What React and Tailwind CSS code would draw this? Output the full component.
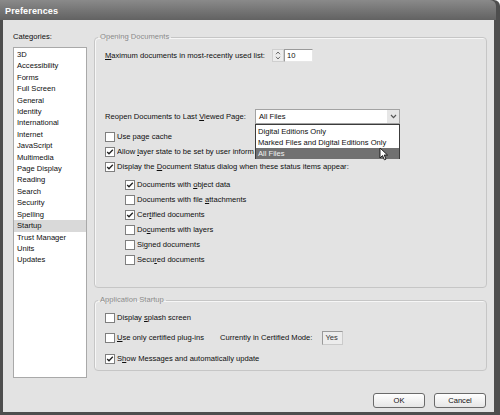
import React from "react";

const categories = [
	"3D",
	"Accessibility",
	"Forms",
	"Full Screen",
	"General",
	"Identity",
	"International",
	"Internet",
	"JavaScript",
	"Multimedia",
	"Page Display",
	"Reading",
	"Search",
	"Security",
	"Spelling",
	"Startup",
	"Trust Manager",
	"Units",
	"Updates",
];

function Box({ checked }) {
	return (
		<span className="w-[10px] h-[10px] shrink-0 bg-white border border-[#7f7f7f] flex items-center justify-center">
			{checked && (
				<svg width="8" height="8" viewBox="0 0 8 8">
					<polyline points="1.2,4 3,5.8 6.8,1.8" fill="none" stroke="#222" strokeWidth="1.3" />
				</svg>
			)}
		</span>
	);
}

function Check({ checked, children, className = "" }) {
	return (
		<div className={`flex items-center h-[15px] gap-[2px] ${className}`}>
			<Box checked={checked} />
			<span className="whitespace-nowrap">{children}</span>
		</div>
	);
}

function Group({ title, className = "", children }) {
	return (
		<fieldset className={`border border-[#c6c6c6] rounded-[4px] px-[10px] shadow-[inset_1px_1px_0_#f6f6f6] ${className}`}>
			<legend className="-ml-[7px] px-[2px] leading-[10px] text-[#8a8a8a]">{title}</legend>
			{children}
		</fieldset>
	);
}

function Button({ children }) {
	return (
		<button
			type="button"
			className="w-[52px] h-[15px] rounded-[3px] border border-[#6a6a6a] bg-gradient-to-b from-white to-[#e6e6e6] text-[#111] leading-none"
		>
			{children}
		</button>
	);
}

export default function App() {
	return (
		<div className="w-[500px] h-[415px] bg-[#4e4e4e] rounded-tr-[6px] flex flex-col font-['Liberation_Sans',Arial,sans-serif] text-[7.6px] text-[#0e0e0e] overflow-hidden">
			<div className="h-[20px] shrink-0 bg-gradient-to-b from-[#8a8a8a] to-[#626262] rounded-tr-[6px] mr-[4px] flex items-center pl-[5px] pt-[3px]">
				<span className="text-white font-bold text-[9.1px] tracking-[0.1px]">Preferences</span>
			</div>
			<div className="flex-1 bg-[#e3e3e3] ml-[3px] mr-[6px] mb-[3px] flex flex-col pl-[10px] pr-[7px]">
				<div className="flex">
					<div className="w-[74px] pt-[12px] flex flex-col">
						<div className="leading-[10px]">Categories:</div>
						<div className="mt-[5px] h-[331px] bg-white border border-[#a9a9a9] pt-[1px] leading-[11.4px]">
							{categories.map((c) => (
								<div key={c} className={`pl-[3px] ${c === "Startup" ? "bg-[#d9d9d9]" : ""}`}>
									{c}
								</div>
							))}
						</div>
					</div>
					<div className="w-[393px] ml-[7px] pt-[12px] flex flex-col">
						<Group title="Opening Documents" className="h-[256px]">
							<div className="mt-[6px] h-[15px] flex items-center">
								<span className="whitespace-nowrap">
									<u>M</u>aximum documents in most-recently used list:
								</span>
								<span className="ml-[7px] w-[12px] h-[13px] bg-[#ececec] border border-[#cfcfcf] flex flex-col items-center justify-center gap-[1px]">
									<svg width="6" height="4" viewBox="0 0 6 4">
										<polyline points="1,3.2 3,1 5,3.2" fill="none" stroke="#6a6a6a" strokeWidth="1" />
									</svg>
									<svg width="6" height="4" viewBox="0 0 6 4">
										<polyline points="1,0.8 3,3 5,0.8" fill="none" stroke="#6a6a6a" strokeWidth="1" />
									</svg>
								</span>
								<span className="w-[29px] h-[13px] bg-white border border-[#9a9a9a] border-r-[#e6e6e6] border-b-[#e6e6e6] pl-[2px] flex items-center">
									10
								</span>
							</div>
							<div className="mt-[46px] h-[15px] flex items-center">
								<span className="w-[150px] whitespace-nowrap">
									Reopen Documents to Last <u>V</u>iewed Page:
								</span>
								<div className="relative">
									<div className="w-[145px] h-[15px] bg-white border border-[#a3a3a3] flex items-center pl-[3px]">
										<span className="flex-1">All Files</span>
										<span className="w-[12px] h-[13px] bg-[#e6e6e6] flex items-center justify-center">
											<svg width="7" height="5" viewBox="0 0 7 5">
												<polyline points="1,1 3.5,3.6 6,1" fill="none" stroke="#555" strokeWidth="1.2" />
											</svg>
										</span>
									</div>
									<div className="absolute left-0 top-[15px] w-[145px] h-[35px] bg-white border border-[#3c3c3c] z-10 flex flex-col leading-[11px]">
										<div className="pl-[2px] mt-[1px]">Digital Editions Only</div>
										<div className="pl-[2px]">Marked Files and Digital Editions Only</div>
										<div className="pl-[2px] flex-1 bg-[#717171] text-[#f2f2f2] flex items-center">All Files</div>
									</div>
									<svg className="absolute z-20 left-[124px] top-[38px]" width="10" height="14" viewBox="0 0 10 14">
										<path d="M1 1 L1 11 L3.5 8.6 L5.4 12.8 L7 12.1 L5.2 8 L8.5 8 Z" fill="#fff" stroke="#111" strokeWidth="0.9" strokeLinejoin="round" />
									</svg>
								</div>
							</div>
							<Check className="mt-[5px]">
								Use pa<u>g</u>e cache
							</Check>
							<div className="flex items-center h-[15px] gap-[2px]">
								<Box checked />
								<span className="whitespace-nowrap w-[137px] overflow-hidden">
									Allow <u>l</u>ayer state to be set by user information
								</span>
							</div>
							<Check checked>
								Display the <u>D</u>ocument Status dialog when these status items appear:
							</Check>
							<div className="ml-[20px] mt-[3px] flex flex-col">
								<Check checked>
									Documents with <u>o</u>bject data
								</Check>
								<Check>
									Documents with file <u>a</u>ttachments
								</Check>
								<Check checked>
									Cer<u>t</u>ified documents
								</Check>
								<Check>
									Do<u>c</u>uments with layers
								</Check>
								<Check>
									Si<u>g</u>ned documents
								</Check>
								<Check>
									Secu<u>r</u>ed documents
								</Check>
							</div>
						</Group>
						<Group title="Application Startup" className="h-[76px] mt-[7px]">
							<Check className="mt-[5px]">
								Display <u>s</u>plash screen
							</Check>
							<div className="mt-[5px] h-[15px] flex items-center">
								<Check className="w-[115px]">
									<u>U</u>se only certified plug-ins
								</Check>
								<span className="whitespace-nowrap">Currently in Certified Mode:</span>
								<span className="ml-[10px] w-[21px] h-[14px] bg-[#ececec] border border-[#cacaca] border-t-[#9a9a9a] border-l-[#9a9a9a] pl-[2px] flex items-center text-[#333]">
									Yes
								</span>
							</div>
							<Check checked className="mt-[6px]">
								S<u>h</u>ow Messages and automatically update
							</Check>
						</Group>
					</div>
				</div>
				<div className="mt-[15px] flex justify-end gap-[9px] pr-[1px]">
					<Button>OK</Button>
					<Button>Cancel</Button>
				</div>
			</div>
		</div>
	);
}
